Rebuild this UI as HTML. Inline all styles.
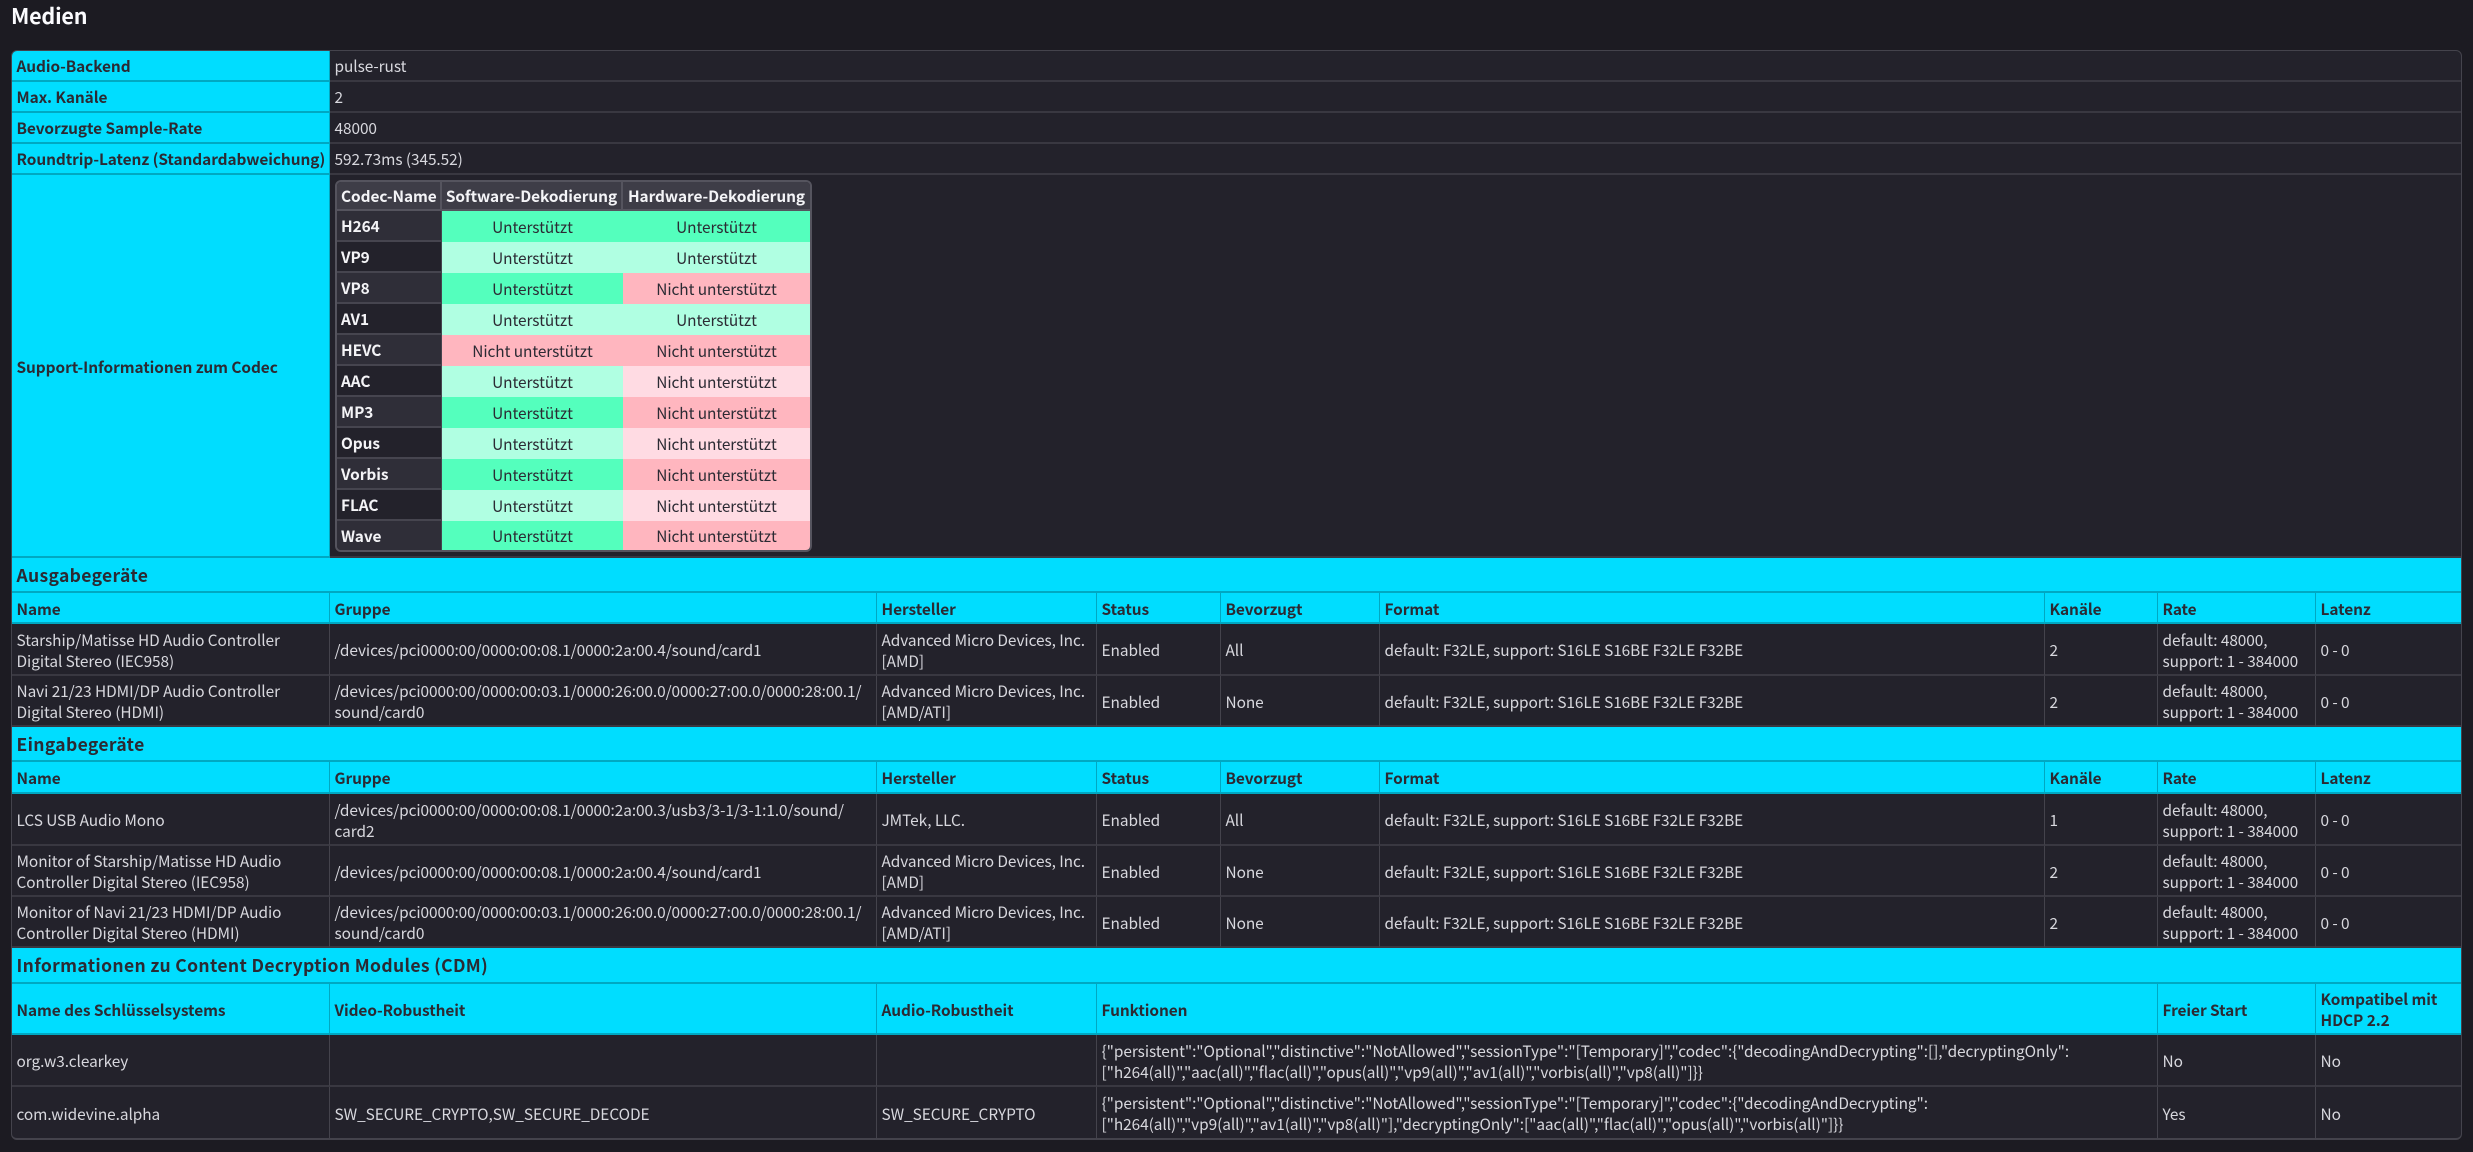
<!DOCTYPE html>
<html lang="de"><head><meta charset="utf-8"><title>Medien</title>
<style>
html,body{margin:0;padding:0;width:2473px;height:1152px;overflow:hidden;background:#1c1b22}
body{font-family:"Noto Sans CJK JP","Liberation Sans",sans-serif;font-size:15.4px;line-height:20.6px;color:#d8d8de;letter-spacing:-.06px}
h1{position:absolute;left:11px;top:1px;margin:0;font-size:21.5px;line-height:30px;font-weight:700;color:#fbfbfe;letter-spacing:-.2px}
#w{position:absolute;left:11px;top:50px;width:2449px;height:1087px;border:1px solid #44434c;border-bottom-width:2px;border-radius:6px;overflow:hidden;background:#23222b}
table{border-collapse:separate;border-spacing:0;table-layout:fixed}
#m{width:2449px}
#m td,#m th{box-sizing:border-box;padding:3px 4px 0 4.5px;vertical-align:middle;text-align:left;white-space:nowrap;border-right:1px solid #44434c;border-bottom:2px solid #393841;overflow:hidden}
#m th{background:#00ddff;color:#2b2a33;font-weight:700;border-color:#00a8c2}
#m tr.t>*{padding-top:2px}
#m tr>*:last-child{border-right:0}
#m tr:last-child>*{border-bottom:0}
#m th.s{font-size:17.5px;letter-spacing:.35px;padding-top:3px}
#m td.cc{padding:5px 0 0 4px;vertical-align:top}
#c{width:473px}
.cw{width:473px;height:368px;border:2px solid #55545e;border-radius:6px;overflow:hidden;margin-left:1px;background:#23222b}
#m #c td,#m #c th{box-sizing:border-box;padding:2px 0 0 4px;border:0;white-space:nowrap;overflow:visible;vertical-align:middle}
#m #c td{text-align:center;padding:2px 0 0 0;color:#2b2a33}
#m #c th{background:#3e3d47;color:#f4f4f7;font-weight:700;border-right:2px solid #55545e;border-bottom:2px solid #55545e;text-align:left}
#m #c tr>th:last-child{border-right:0}
#m #c th.a{background:#2f2e38;border-bottom:2px solid #46454f;border-right:1px solid #46454f}
#m #c th.b{background:#23222b;border-bottom:2px solid #46454f;border-right:1px solid #46454f}
#m #c tr:last-child>th{border-bottom:0}
#m #c th.h{text-align:center;padding:2px 0 0 0}
#m #c td.g{background:#54ffbd}
#m #c td.l{background:#b0ffe2}
#m #c td.r{background:#ffb6bf}
#m #c td.p{background:#ffdbe3}
</style></head><body>
<h1>Medien</h1>
<div id="w">
<table id="m">
<colgroup><col style="width:318px"><col style="width:547px"><col style="width:220px"><col style="width:124px"><col style="width:159px"><col style="width:665px"><col style="width:113px"><col style="width:158px"><col style="width:145px"></colgroup>
<tr class="t" style="height:31px"><th style="height:31px">Audio-Backend</th><td colspan="8" style="height:31px">pulse-rust</td></tr>
<tr class="t" style="height:31px"><th style="height:31px">Max. Kanäle</th><td colspan="8">2</td></tr>
<tr class="t" style="height:31px"><th style="height:31px">Bevorzugte Sample-Rate</th><td colspan="8">48000</td></tr>
<tr class="t" style="height:31px"><th style="height:31px">Roundtrip-Latenz (Standardabweichung)</th><td colspan="8">592.73ms (345.52)</td></tr>
<tr style="height:383px"><th style="height:383px">Support-Informationen zum Codec</th><td class="cc" colspan="8">
<div class="cw"><table id="c">
<colgroup><col style="width:105px"><col style="width:181px"><col style="width:187px"></colgroup>
<tr style="height:29px"><th style="height:29px">Codec-Name</th><th class="h">Software-Dekodierung</th><th class="h">Hardware-Dekodierung</th></tr>
<tr style="height:31px"><th class="a" style="height:31px">H264</th><td class="g">Unterstützt</td><td class="g">Unterstützt</td></tr>
<tr style="height:31px"><th class="b" style="height:31px">VP9</th><td class="l">Unterstützt</td><td class="l">Unterstützt</td></tr>
<tr style="height:31px"><th class="a" style="height:31px">VP8</th><td class="g">Unterstützt</td><td class="r">Nicht unterstützt</td></tr>
<tr style="height:31px"><th class="b" style="height:31px">AV1</th><td class="l">Unterstützt</td><td class="l">Unterstützt</td></tr>
<tr style="height:31px"><th class="a" style="height:31px">HEVC</th><td class="r">Nicht unterstützt</td><td class="r">Nicht unterstützt</td></tr>
<tr style="height:31px"><th class="b" style="height:31px">AAC</th><td class="l">Unterstützt</td><td class="p">Nicht unterstützt</td></tr>
<tr style="height:31px"><th class="a" style="height:31px">MP3</th><td class="g">Unterstützt</td><td class="r">Nicht unterstützt</td></tr>
<tr style="height:31px"><th class="b" style="height:31px">Opus</th><td class="l">Unterstützt</td><td class="p">Nicht unterstützt</td></tr>
<tr style="height:31px"><th class="a" style="height:31px">Vorbis</th><td class="g">Unterstützt</td><td class="r">Nicht unterstützt</td></tr>
<tr style="height:31px"><th class="b" style="height:31px">FLAC</th><td class="l">Unterstützt</td><td class="p">Nicht unterstützt</td></tr>
<tr style="height:29px"><th class="a" style="height:29px">Wave</th><td class="g">Unterstützt</td><td class="r">Nicht unterstützt</td></tr>
</table></div></td></tr>
<tr style="height:35px"><th class="s" colspan="9" style="height:35px">Ausgabegeräte</th></tr>
<tr style="height:31px"><th style="height:31px">Name</th><th>Gruppe</th><th>Hersteller</th><th>Status</th><th>Bevorzugt</th><th>Format</th><th>Kanäle</th><th>Rate</th><th>Latenz</th></tr>
<tr style="height:52px"><td style="height:52px">Starship/Matisse HD Audio Controller<br>Digital Stereo (IEC958)</td><td>/devices/pci0000:00/0000:00:08.1/0000:2a:00.4/sound/card1</td><td>Advanced Micro Devices, Inc.<br>[AMD]</td><td>Enabled</td><td>All</td><td>default: F32LE, support: S16LE S16BE F32LE F32BE</td><td>2</td><td>default: 48000,<br>support: 1 - 384000</td><td>0 - 0</td></tr>
<tr style="height:51px"><td style="height:51px">Navi 21/23 HDMI/DP Audio Controller<br>Digital Stereo (HDMI)</td><td>/devices/pci0000:00/0000:00:03.1/0000:26:00.0/0000:27:00.0/0000:28:00.1/<br>sound/card0</td><td>Advanced Micro Devices, Inc.<br>[AMD/ATI]</td><td>Enabled</td><td>None</td><td>default: F32LE, support: S16LE S16BE F32LE F32BE</td><td>2</td><td>default: 48000,<br>support: 1 - 384000</td><td>0 - 0</td></tr>
<tr style="height:35px"><th class="s" colspan="9" style="height:35px">Eingabegeräte</th></tr>
<tr style="height:32px"><th style="height:32px">Name</th><th>Gruppe</th><th>Hersteller</th><th>Status</th><th>Bevorzugt</th><th>Format</th><th>Kanäle</th><th>Rate</th><th>Latenz</th></tr>
<tr style="height:52px"><td style="height:52px">LCS USB Audio Mono</td><td>/devices/pci0000:00/0000:00:08.1/0000:2a:00.3/usb3/3-1/3-1:1.0/sound/<br>card2</td><td>JMTek, LLC.</td><td>Enabled</td><td>All</td><td>default: F32LE, support: S16LE S16BE F32LE F32BE</td><td>1</td><td>default: 48000,<br>support: 1 - 384000</td><td>0 - 0</td></tr>
<tr style="height:51px"><td style="height:51px">Monitor of Starship/Matisse HD Audio<br>Controller Digital Stereo (IEC958)</td><td>/devices/pci0000:00/0000:00:08.1/0000:2a:00.4/sound/card1</td><td>Advanced Micro Devices, Inc.<br>[AMD]</td><td>Enabled</td><td>None</td><td>default: F32LE, support: S16LE S16BE F32LE F32BE</td><td>2</td><td>default: 48000,<br>support: 1 - 384000</td><td>0 - 0</td></tr>
<tr style="height:51px"><td style="height:51px">Monitor of Navi 21/23 HDMI/DP Audio<br>Controller Digital Stereo (HDMI)</td><td>/devices/pci0000:00/0000:00:03.1/0000:26:00.0/0000:27:00.0/0000:28:00.1/<br>sound/card0</td><td>Advanced Micro Devices, Inc.<br>[AMD/ATI]</td><td>Enabled</td><td>None</td><td>default: F32LE, support: S16LE S16BE F32LE F32BE</td><td>2</td><td>default: 48000,<br>support: 1 - 384000</td><td>0 - 0</td></tr>
<tr style="height:36px"><th class="s" colspan="9" style="height:36px">Informationen zu Content Decryption Modules (CDM)</th></tr>
<tr style="height:51px"><th style="height:51px">Name des Schlüsselsystems</th><th>Video-Robustheit</th><th>Audio-Robustheit</th><th colspan="4">Funktionen</th><th>Freier Start</th><th>Kompatibel mit<br>HDCP 2.2</th></tr>
<tr style="height:52px"><td style="height:52px">org.w3.clearkey</td><td></td><td></td><td colspan="4">{"persistent":"Optional","distinctive":"NotAllowed","sessionType":"[Temporary]","codec":{"decodingAndDecrypting":[],"decryptingOnly":<br>["h264(all)","aac(all)","flac(all)","opus(all)","vp9(all)","av1(all)","vorbis(all)","vp8(all)"]}}</td><td>No</td><td>No</td></tr>
<tr style="height:51px"><td style="height:51px">com.widevine.alpha</td><td>SW_SECURE_CRYPTO,SW_SECURE_DECODE</td><td>SW_SECURE_CRYPTO</td><td colspan="4">{"persistent":"Optional","distinctive":"NotAllowed","sessionType":"[Temporary]","codec":{"decodingAndDecrypting":<br>["h264(all)","vp9(all)","av1(all)","vp8(all)"],"decryptingOnly":["aac(all)","flac(all)","opus(all)","vorbis(all)"]}}</td><td>Yes</td><td>No</td></tr>
</table>
</div>
</body></html>
